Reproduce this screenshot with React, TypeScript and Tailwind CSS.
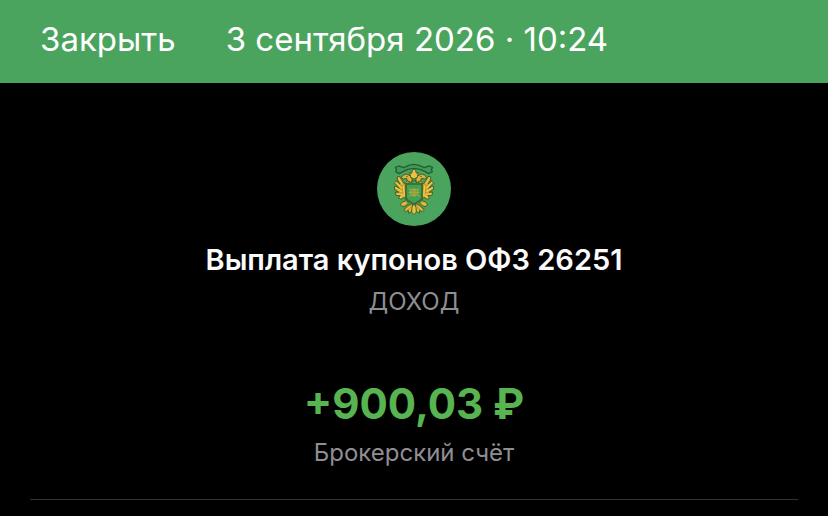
import React from "react";

const operation = {
  date: "3 сентября 2026 · 10:24",
  title: "Выплата купонов ОФЗ 26251",
  kind: "ДОХОД",
  amount: "+900,03 ₽",
  account: "Брокерский счёт",
};

// One half of the eagle: wing, head, claw. The other half is mirrored.
const EagleHalf = () => (
  <g strokeLinejoin="round" strokeLinecap="round">
    {/* Wing */}
    <path
      d="M118 98 L100 98 L92 108 L84 96 L78 86 L70 86 L70 96 L78 108 L66 98 L62 106 L76 121 L62 114 L61 124 L74 133 L64 132 L66 142 L78 143 L73 150 L81 154 L90 148 L96 156 L96 110 Z"
      fill="#c79d2e"
      stroke="#42672a"
      strokeWidth="3"
    />
    <path
      d="M74 90 L84 108 M66 103 L82 120 M65 119 L82 130 M69 138 L84 139 M79 149 L88 143 M88 114 L91 142"
      stroke="#f1cb4f"
      strokeWidth="4"
      fill="none"
    />
    {/* Head */}
    <path
      d="M112 104 L100 98 L98 91 L88 93 L82 89 L88 81 L98 78 L108 83 L114 92 Z"
      fill="#dfb33b"
      stroke="#42602a"
      strokeWidth="3"
    />
    <circle cx="99" cy="85" r="2" fill="#3b4b22" />
    {/* Claw */}
    <path
      d="M96 158 L87 161 L79 168 L84 176 L94 174 L103 166 Z"
      fill="#d6ab37"
      stroke="#42672a"
      strokeWidth="3"
    />
    {/* Tail feathers */}
    <path
      d="M114 167 L101 173 L89 186 L94 191 L103 187 L104 196 L112 191 L118 180 Z"
      fill="#cda232"
      stroke="#42672a"
      strokeWidth="3"
    />
    <path
      d="M85 169 L94 166 M96 186 L108 175 M107 190 L114 178"
      stroke="#efc84d"
      strokeWidth="3"
    />
  </g>
);

const Emblem = () => (
  <svg
    viewBox="9 12 222 222"
    className="size-[74px]"
    role="img"
    aria-label="ОФЗ"
  >
    <circle cx="120" cy="123" r="111" fill="#4aa45e" />
    <EagleHalf />
    <g transform="matrix(-1 0 0 1 240 0)">
      <EagleHalf />
    </g>
    <path
      d="M120 166 L114 178 L113 192 L120 200 L127 192 L126 178 Z"
      fill="#ecc248"
      stroke="#42672a"
      strokeWidth="3"
    />
    {/* Crown and ribbon */}
    <path
      d="M64 58 L74 54 L90 59 L104 52 L120 49 L136 52 L150 59 L166 54 L176 58 L172 64 L175 71 L164 77 L152 70 L138 64 L120 61 L102 64 L88 70 L76 77 L65 71 L68 64 Z"
      fill="#3f9c57"
      stroke="#265c35"
      strokeWidth="4"
      strokeLinejoin="round"
    />
    <path
      d="M110 88 L107 73 L113 76 L115 68 L120 63 L125 68 L127 76 L133 73 L130 88 L120 93 Z"
      fill="#ecc146"
      stroke="#4a602a"
      strokeWidth="3"
      strokeLinejoin="round"
    />
    {/* Shield */}
    <path
      d="M96 108 H144 V148 C144 157 132 162 120 168 C108 162 96 157 96 148 Z"
      fill="#429f58"
      stroke="#3c6a2a"
      strokeWidth="5"
    />
    <path
      d="M104 121 L110 126 V139 L104 146 M136 121 L130 126 V139 L136 146 M110 125 H130 M110 141 H130 M117 121 V146 M123 121 V146 M104 133 H136"
      stroke="#b9a936"
      strokeWidth="3"
      fill="none"
    />
  </svg>
);

const App = () => {
  return (
    <div className="min-h-screen bg-black font-['Inter','Liberation_Sans',sans-serif]">
      <header className="flex items-center gap-[50px] bg-[#4ba45e] px-10 pt-[15px] pb-5 text-[33px] leading-[48px] text-white">
        <button type="button" className="cursor-pointer">
          Закрыть
        </button>
        <h1>{operation.date}</h1>
      </header>

      <main className="px-[30px] pt-[69px]">
        <section className="flex flex-col items-center border-b border-[#333335] pb-[30px] text-center">
          <Emblem />
          <h2 className="mt-4 text-[29px] leading-9 font-semibold text-[#fafafa]">
            {operation.title}
          </h2>
          <p className="mt-2 text-[24px] leading-8 text-[#8e8e93]">
            {operation.kind}
          </p>
          <p className="mt-[58px] text-[42px] leading-[56px] font-bold text-[#58b450]">
            {operation.amount}
          </p>
          <p className="mt-[5px] text-[24px] leading-8 text-[#8e8e93]">
            {operation.account}
          </p>
        </section>
      </main>
    </div>
  );
};

export default App;
